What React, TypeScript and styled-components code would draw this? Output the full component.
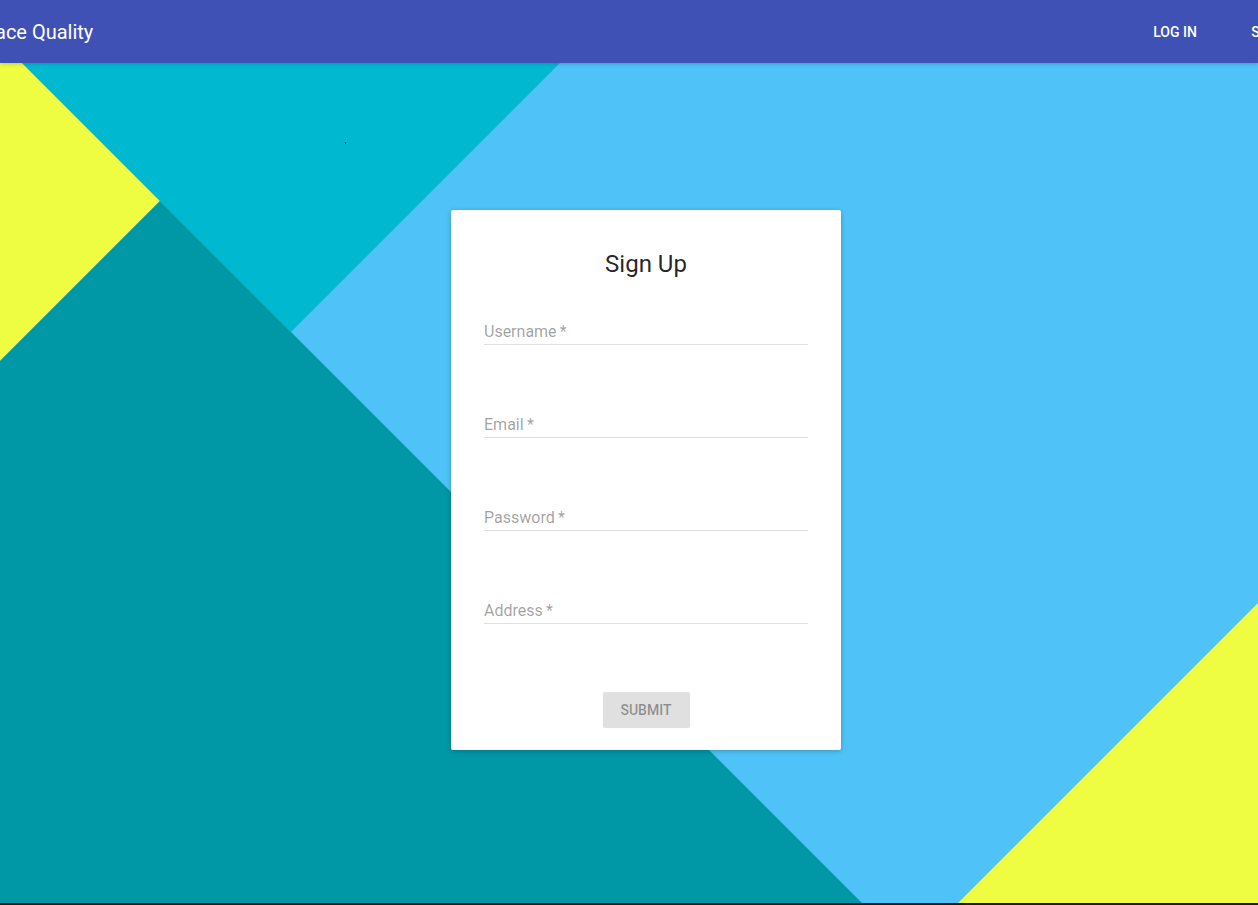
import React from "react";
import styled, { createGlobalStyle } from "styled-components";

const GlobalStyle = createGlobalStyle`
  html, body {
    margin: 0;
    padding: 0;
    background: #141a18;
    font-family: Roboto, "Noto Sans", "Liberation Sans", sans-serif;
    overflow: hidden;
  }
  * { box-sizing: border-box; }
`;

const Page = styled.div`
  width: 100%;
  display: flex;
  flex-direction: column;
`;

const AppBar = styled.header`
  height: 63px;
  background: #3f51b5;
  color: #fff;
  display: flex;
  align-items: center;
  overflow: hidden;
  position: relative;
  z-index: 2;
  box-shadow: 0 1px 4px rgba(0, 0, 0, 0.2);
`;

const Title = styled.h1`
  margin: 0 0 0 -5px;
  font-size: 20px;
  font-weight: 400;
  letter-spacing: 0;
  white-space: nowrap;
  flex: 1;
`;

const Nav = styled.nav`
  display: flex;
  align-items: center;
  gap: 15px;
  margin-right: -64px;
  flex-shrink: 0;
`;

const NavButton = styled.button`
  min-width: 88px;
  height: 36px;
  padding: 0 16px;
  border: none;
  background: transparent;
  color: #fff;
  font-family: inherit;
  font-size: 14px;
  font-weight: 500;
  text-transform: uppercase;
  white-space: nowrap;
  cursor: pointer;
`;

const Main = styled.main`
  position: relative;
  height: 840px;
  display: flex;
  justify-content: center;
  align-items: flex-start;
  padding: 147px 0 0 34px;
`;

const Backdrop = styled.svg`
  position: absolute;
  inset: 0;
  width: 100%;
  height: 100%;
  z-index: 0;
`;

const Card = styled.section`
  position: relative;
  z-index: 1;
  width: 390px;
  height: 540px;
  background: #fff;
  border-radius: 2px;
  box-shadow: 0 1px 6px rgba(0, 0, 0, 0.12), 0 1px 4px rgba(0, 0, 0, 0.12);
  padding: 38px 33px 22px;
  display: flex;
  flex-direction: column;
`;

const CardTitle = styled.h2`
  margin: 0 0 40px;
  font-size: 24px;
  line-height: 32px;
  font-weight: 400;
  color: rgba(0, 0, 0, 0.87);
  text-align: center;
`;

const Fields = styled.div`
  display: flex;
  flex-direction: column;
  gap: 68px;
`;

const Field = styled.label`
  display: block;
  height: 25px;
  border-bottom: 1px solid #e0e0e0;
  font-size: 16px;
  line-height: 24px;
  color: rgba(0, 0, 0, 0.38);
`;

const Actions = styled.div`
  display: flex;
  justify-content: center;
  margin-top: 68px;
`;

const SubmitButton = styled.button`
  width: 87px;
  height: 36px;
  border: none;
  border-radius: 2px;
  background: #e0e0e0;
  color: rgba(0, 0, 0, 0.38);
  font-family: inherit;
  font-size: 14px;
  font-weight: 500;
  text-transform: uppercase;
  box-shadow: 0 0 1px rgba(0, 0, 0, 0.08);
`;

const fields = ["Username", "Email", "Password", "Address"];

export default function App() {
  return (
    <>
      <GlobalStyle />
      <Page>
        <AppBar>
          <Title>ace Quality</Title>
          <Nav>
            <NavButton>Log in</NavButton>
            <NavButton>Sign up</NavButton>
          </Nav>
        </AppBar>
        <Main>
          <Backdrop viewBox="0 0 1258 840" preserveAspectRatio="none" aria-hidden="true">
            <rect x="0" y="0" width="1258" height="840" fill="#4fc3f7" />
            <polygon points="0,0 22,0 160,138 0,298" fill="#eefd41" />
            <polygon points="22,0 560,0 291,269" fill="#00b9d1" />
            <polygon points="0,298 160,138 862,840 0,840" fill="#0097a7" />
            <polygon points="958,840 1258,540 1258,840" fill="#eefd41" />
            <rect x="345" y="79" width="1" height="2" fill="#0a2a30" />
          </Backdrop>
          <Card>
            <CardTitle>Sign Up</CardTitle>
            <Fields>
              {fields.map((f) => (
                <Field key={f}>{f}&thinsp;*</Field>
              ))}
            </Fields>
            <Actions>
              <SubmitButton disabled>Submit</SubmitButton>
            </Actions>
          </Card>
        </Main>
      </Page>
    </>
  );
}
